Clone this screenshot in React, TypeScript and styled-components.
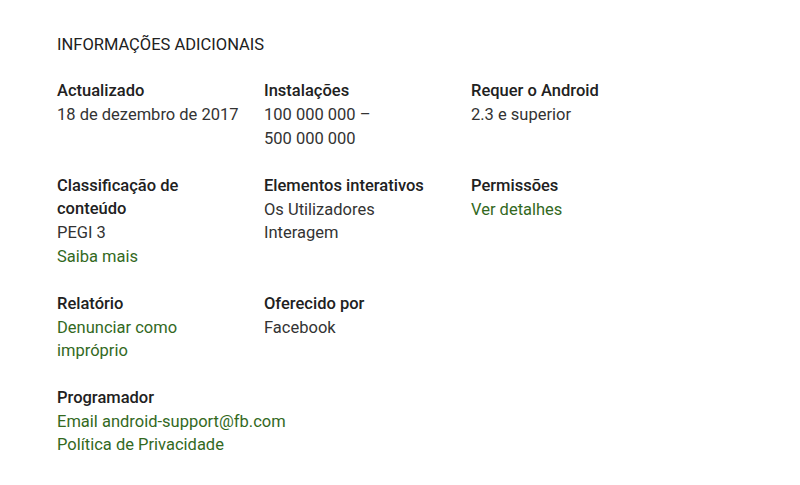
import React from "react";
import styled, { createGlobalStyle } from "styled-components";

const Global = createGlobalStyle`
  html, body { margin: 0; padding: 0; background: #fff; }
  body { font-family: Roboto, "Noto Sans", Arial, sans-serif; }
`;

const Page = styled.div`
  width: 800px;
  height: 485px;
  box-sizing: border-box;
  padding: 34px 0 0 57px;
  background: #fff;
`;

const Heading = styled.h2`
  margin: 0 0 23px;
  font-size: 16.5px;
  font-weight: 400;
  line-height: 22px;
  color: #212121;
  text-transform: uppercase;
`;

const Grid = styled.div`
  display: grid;
  grid-template-columns: repeat(3, 183px);
  column-gap: 24px;
  row-gap: 24px;
`;

const Item = styled.div`
  display: flex;
  flex-direction: column;
`;

const Title = styled.div`
  font-size: 16.5px;
  font-weight: 500;
  line-height: 23.25px;
  color: #212121;
  margin-bottom: 1px;
`;

const Value = styled.div<{ $link?: boolean }>`
  font-size: 16.5px;
  font-weight: 400;
  line-height: 23.25px;
  color: ${(p) => (p.$link ? "#33691e" : "#333")};
`;

type Line = { text: string; link?: boolean };
type Info = { title: string; lines: Line[] };

const NB = "\u00a0";

const items: Info[] = [
  { title: "Actualizado", lines: [{ text: "18 de dezembro de 2017" }] },
  {
    title: "Instalações",
    lines: [{ text: `100${NB}000${NB}000 – 500${NB}000${NB}000` }],
  },
  { title: "Requer o Android", lines: [{ text: "2.3 e superior" }] },
  {
    title: "Classificação de conteúdo",
    lines: [{ text: "PEGI 3" }, { text: "Saiba mais", link: true }],
  },
  { title: "Elementos interativos", lines: [{ text: "Os Utilizadores Interagem" }] },
  { title: "Permissões", lines: [{ text: "Ver detalhes", link: true }] },
  { title: "Relatório", lines: [{ text: "Denunciar como impróprio", link: true }] },
  { title: "Oferecido por", lines: [{ text: "Facebook" }] },
  { title: "", lines: [] },
];

const Developer = styled.div`
  margin-top: 23px;
  display: flex;
  flex-direction: column;
`;

export default function App() {
  return (
    <Page>
      <Global />
      <Heading>Informações adicionais</Heading>
      <Grid>
        {items.map((it, i) => (
          <Item key={i}>
            {it.title && <Title>{it.title}</Title>}
            {it.lines.map((l, j) => (
              <Value key={j} $link={l.link}>
                {l.text}
              </Value>
            ))}
          </Item>
        ))}
      </Grid>
      <Developer>
        <Title>Programador</Title>
        <Value $link>Email android-support@fb.com</Value>
        <Value $link>Política de Privacidade</Value>
      </Developer>
    </Page>
  );
}
